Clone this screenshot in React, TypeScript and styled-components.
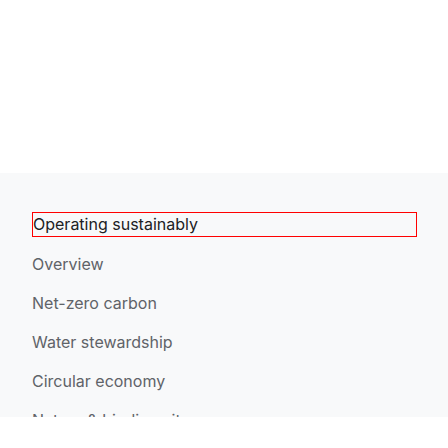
import styled, { createGlobalStyle } from 'styled-components';

const GlobalStyle = createGlobalStyle`
  body {
    margin: 0;
    background: #ffffff;
    font-family: Inter, "Open Sans", Arial, sans-serif;
  }
`;

const items = ['Overview', 'Net-zero carbon', 'Water stewardship', 'Circular economy', 'Nature & biodiversity'];

const App = () => {
  return (
    <>
      <GlobalStyle />
      <Page>
        <Hero />
        <NavPanel>
          <Title href="#">Operating sustainably</Title>
          <List>
            {items.map((label) => (
              <Item key={label}>
                <ItemLink href="#">{label}</ItemLink>
              </Item>
            ))}
          </List>
        </NavPanel>
      </Page>
    </>
  );
};

export default App;

const Page = styled.div`
  width: 448px;
  height: 448px;
  background: #ffffff;
`;

const Hero = styled.div`
  height: 173px;
`;

const NavPanel = styled.nav`
  height: 244px;
  box-sizing: border-box;
  padding: 40px 31px 0 32px;
  background: #f8f9fa;
  overflow: hidden;
`;

const Title = styled.a`
  display: block;
  height: 23px;
  margin: 0 1px;
  outline: 1px solid #ff0000;
  font-size: 16px;
  line-height: 22px;
  color: #202124;
  text-decoration: none;
`;

const List = styled.ul`
  list-style: none;
  margin: 8px 0 0;
  padding: 0;
`;

const Item = styled.li`
  height: 39px;
  display: flex;
  align-items: center;
`;

const ItemLink = styled.a`
  font-size: 16px;
  color: #5f6368;
  text-decoration: none;
`;
